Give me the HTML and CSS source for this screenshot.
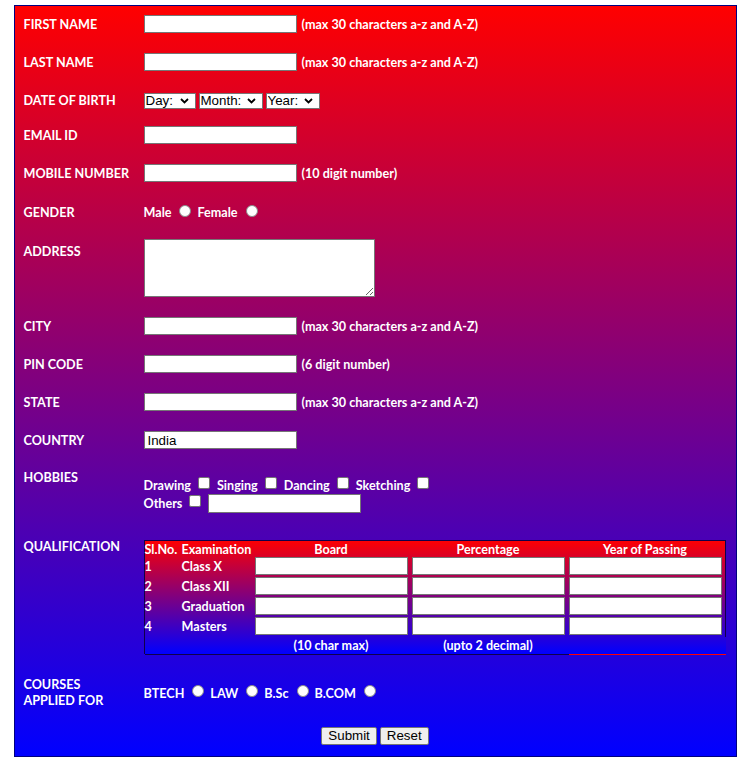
FILE: index.html
```html
<!DOCTYPE html>
<html lang="en">
<head>
<meta charset="utf-8">
<title>Registration Form</title>
<link rel="stylesheet" href="styles.css">
</head>
<body>
<form class="form">
  <div class="row">
    <div class="label">FIRST NAME</div>
    <div class="field"><input class="text" type="text"><span class="hint">(max 30 characters a-z and A-Z)</span></div>
  </div>
  <div class="row">
    <div class="label">LAST NAME</div>
    <div class="field"><input class="text" type="text"><span class="hint">(max 30 characters a-z and A-Z)</span></div>
  </div>
  <div class="row row-dob">
    <div class="label">DATE OF BIRTH</div>
    <div class="field dob">
      <span class="select select-day"><select><option>Day:</option></select><svg class="chev" width="9" height="6" viewBox="0 0 9 6"><path d="M1 1 L4.5 4.5 L8 1" fill="none" stroke="#000" stroke-width="1.8"/></svg></span>
      <span class="select select-month"><select><option>Month:</option></select><svg class="chev" width="9" height="6" viewBox="0 0 9 6"><path d="M1 1 L4.5 4.5 L8 1" fill="none" stroke="#000" stroke-width="1.8"/></svg></span>
      <span class="select select-year"><select><option>Year:</option></select><svg class="chev" width="9" height="6" viewBox="0 0 9 6"><path d="M1 1 L4.5 4.5 L8 1" fill="none" stroke="#000" stroke-width="1.8"/></svg></span>
    </div>
  </div>
  <div class="row">
    <div class="label">EMAIL ID</div>
    <div class="field"><input class="text" type="text"></div>
  </div>
  <div class="row row-39">
    <div class="label">MOBILE NUMBER</div>
    <div class="field"><input class="text" type="text"><span class="hint">(10 digit number)</span></div>
  </div>
  <div class="row row-39">
    <div class="label">GENDER</div>
    <div class="field"><span class="opt">Male</span><input class="radio" type="radio" name="g"><span class="opt">Female</span><input class="radio" type="radio" name="g"></div>
  </div>
  <div class="row row-address">
    <div class="label">ADDRESS</div>
    <div class="field"><textarea class="area"></textarea></div>
  </div>
  <div class="row">
    <div class="label">CITY</div>
    <div class="field"><input class="text" type="text"><span class="hint">(max 30 characters a-z and A-Z)</span></div>
  </div>
  <div class="row">
    <div class="label">PIN CODE</div>
    <div class="field"><input class="text" type="text"><span class="hint">(6 digit number)</span></div>
  </div>
  <div class="row">
    <div class="label">STATE</div>
    <div class="field"><input class="text" type="text"><span class="hint">(max 30 characters a-z and A-Z)</span></div>
  </div>
  <div class="row row-37">
    <div class="label">COUNTRY</div>
    <div class="field"><input class="text" type="text" value="India"></div>
  </div>
  <div class="row row-hobbies">
    <div class="label">HOBBIES</div>
    <div class="hobbies">
      <div class="line"><span class="opt">Drawing</span><input class="check" type="checkbox"><span class="opt">Singing</span><input class="check" type="checkbox"><span class="opt">Dancing</span><input class="check" type="checkbox"><span class="opt">Sketching</span><input class="check" type="checkbox"></div>
      <div class="line"><span class="opt">Others</span><input class="check" type="checkbox"><input class="text other" type="text"></div>
    </div>
  </div>
  <div class="row row-qual">
    <div class="label">QUALIFICATION</div>
    <div class="qual">
      <div class="qual-grid">
        <div class="th">Sl.No.</div><div class="th">Examination</div><div class="th c">Board</div><div class="th c">Percentage</div><div class="th c">Year of Passing</div>
        <div class="td">1</div><div class="td">Class X</div><div class="td"><input class="cell"></div><div class="td"><input class="cell"></div><div class="td"><input class="cell"></div>
        <div class="td">2</div><div class="td">Class XII</div><div class="td"><input class="cell"></div><div class="td"><input class="cell"></div><div class="td"><input class="cell"></div>
        <div class="td">3</div><div class="td">Graduation</div><div class="td"><input class="cell"></div><div class="td"><input class="cell"></div><div class="td"><input class="cell"></div>
        <div class="td">4</div><div class="td">Masters</div><div class="td"><input class="cell"></div><div class="td"><input class="cell"></div><div class="td"><input class="cell"></div>
      </div>
      <div class="qual-foot">
        <div class="tf"></div><div class="tf"></div><div class="tf c">(10 char max)</div><div class="tf c">(upto 2 decimal)</div><div class="tf last"></div>
      </div>
    </div>
  </div>
  <div class="row row-courses">
    <div class="label two">COURSES<br>APPLIED FOR</div>
    <div class="field"><span class="opt">BTECH</span><input class="radio" type="radio" name="c"><span class="opt">LAW</span><input class="radio" type="radio" name="c"><span class="opt">B.Sc</span><input class="radio" type="radio" name="c"><span class="opt">B.COM</span><input class="radio" type="radio" name="c"></div>
  </div>
  <div class="buttons">
    <button type="submit" class="btn">Submit</button>
    <button type="reset" class="btn">Reset</button>
  </div>
</form>
</body>
</html>
```

FILE: styles.css
```css
html, body {
  margin: 0;
  padding: 0;
  background: #fff;
}

.form {
  width: 723px;
  box-sizing: border-box;
  margin: 5px auto 0;
  border: 1px solid #000080;
  padding: 9px 9px 11px;
  background: linear-gradient(to bottom, #ff0000, #0000ff);
  color: #fff;
  font-family: Lato, "Open Sans", sans-serif;
  font-weight: bold;
  font-size: 12.6px;
}

.row {
  display: grid;
  grid-template-columns: 120px 1fr;
  align-items: start;
  height: 38px;
}
.row-dob { height: 35px; }
.row-39 { height: 39px; }
.row-37 { height: 37px; }
.row-address { height: 75px; }
.row-hobbies { height: 69px; }
.row-qual { height: 139px; }
.row-courses { height: 32px; align-items: center; }

.label {
  line-height: 18px;
  padding-top: 1px;
  white-space: nowrap;
}
.label.two { line-height: 16px; padding-top: 1px; }

.field {
  display: flex;
  align-items: center;
  min-height: 18px;
  line-height: 18px;
  white-space: nowrap;
}

.hint, .opt {
  padding-top: 2px;
  line-height: 16px;
}

.text {
  width: 153px;
  height: 18px;
  box-sizing: border-box;
  border: 1px solid #767676;
  border-radius: 0;
  padding: 1px 3px;
  margin: 0;
  background: #fff;
  font-family: "Liberation Sans", Arial, sans-serif;
  font-size: 13.33px;
  color: #000;
}

.hint { margin-left: 5px; }

.dob { gap: 3px; }
.select {
  display: inline-flex;
  align-items: center;
  height: 16px;
  box-sizing: border-box;
  border: 1px solid #767676;
  background: #fff;
  padding: 0 6px 0 1px;
  margin-top: 1px;
}
.select-day { width: 52px; }
.select-month { width: 64px; }
.select-year { width: 54px; }
.select select {
  appearance: none;
  -webkit-appearance: none;
  border: none;
  background: transparent;
  padding: 0;
  margin: 0;
  flex: 1 1 auto;
  min-width: 0;
  height: 14px;
  line-height: 14px;
  font-family: "Liberation Sans", Arial, sans-serif;
  font-size: 13.33px;
  color: #000;
  outline: none;
}
.chev { flex: none; }

.radio {
  appearance: none;
  -webkit-appearance: none;
  width: 12px;
  height: 12px;
  box-sizing: border-box;
  border: 1px solid #8a8a8a;
  border-radius: 50%;
  background: #fff;
  margin: 0 6px 3px 8px;
}

.area {
  width: 231px;
  height: 58px;
  box-sizing: border-box;
  border: 1px solid #767676;
  margin: -3px 0 0;
  padding: 2px;
  background: #fff;
  font-family: "Liberation Mono", monospace;
  font-size: 13.33px;
}

.hobbies {
  padding-top: 8px;
}
.line {
  display: flex;
  align-items: center;
  height: 18px;
  white-space: nowrap;
}
.check {
  appearance: none;
  -webkit-appearance: none;
  width: 12px;
  height: 12px;
  box-sizing: border-box;
  border: 1px solid #767676;
  border-radius: 2px;
  background: #fff;
  margin: 0 7px 4px 7px;
}
.other {
  height: 19px;
  margin-left: 0;
}

.qual {
  margin-top: 3px;
  width: 582px;
  background: linear-gradient(to bottom, #ff0000, #0000ff);
}
.qual-grid, .qual-foot {
  display: grid;
  grid-template-columns: 37px 73px 157px 157px 156px;
}
.qual-grid {
  border: 1px solid #10004a;
  border-bottom: none;
  grid-template-rows: 16px repeat(4, 20px);
}
.qual-foot {
  border-left: 1px solid #10004a;
  height: 17px;
  grid-template-columns: 37px 73px 157px 157px 157px;
}
.th, .tf {
  line-height: 16px;
  padding-top: 1px;
  white-space: nowrap;
  box-sizing: border-box;
}
.td {
  line-height: 18px;
  padding-top: 1px;
  white-space: nowrap;
}
.td:nth-child(5n+3), .td:nth-child(5n+4), .td:nth-child(5n) { padding-top: 0; }
.th.c, .tf.c {
  padding-right: 4px;
  text-align: center;
}
.th.c:nth-child(5) { padding-right: 3px; }
.tf {
  border-bottom: 1px solid #10004a;
}
.tf.last {
  border-bottom-color: #ff0000;
}
.cell {
  display: block;
  width: 153px;
  height: 18px;
  box-sizing: border-box;
  border: 1px solid #767676;
  margin: 0;
  padding: 1px 3px;
  background: #fff;
}

.buttons {
  display: flex;
  justify-content: center;
  gap: 3px;
  margin-top: 19px;
}
.btn {
  height: 18px;
  box-sizing: border-box;
  padding: 0 6px;
  border: 1px solid #767676;
  border-radius: 2px;
  background: #efefef;
  font-family: "Liberation Sans", Arial, sans-serif;
  font-size: 13.33px;
  line-height: 16px;
  color: #000;
}
```
